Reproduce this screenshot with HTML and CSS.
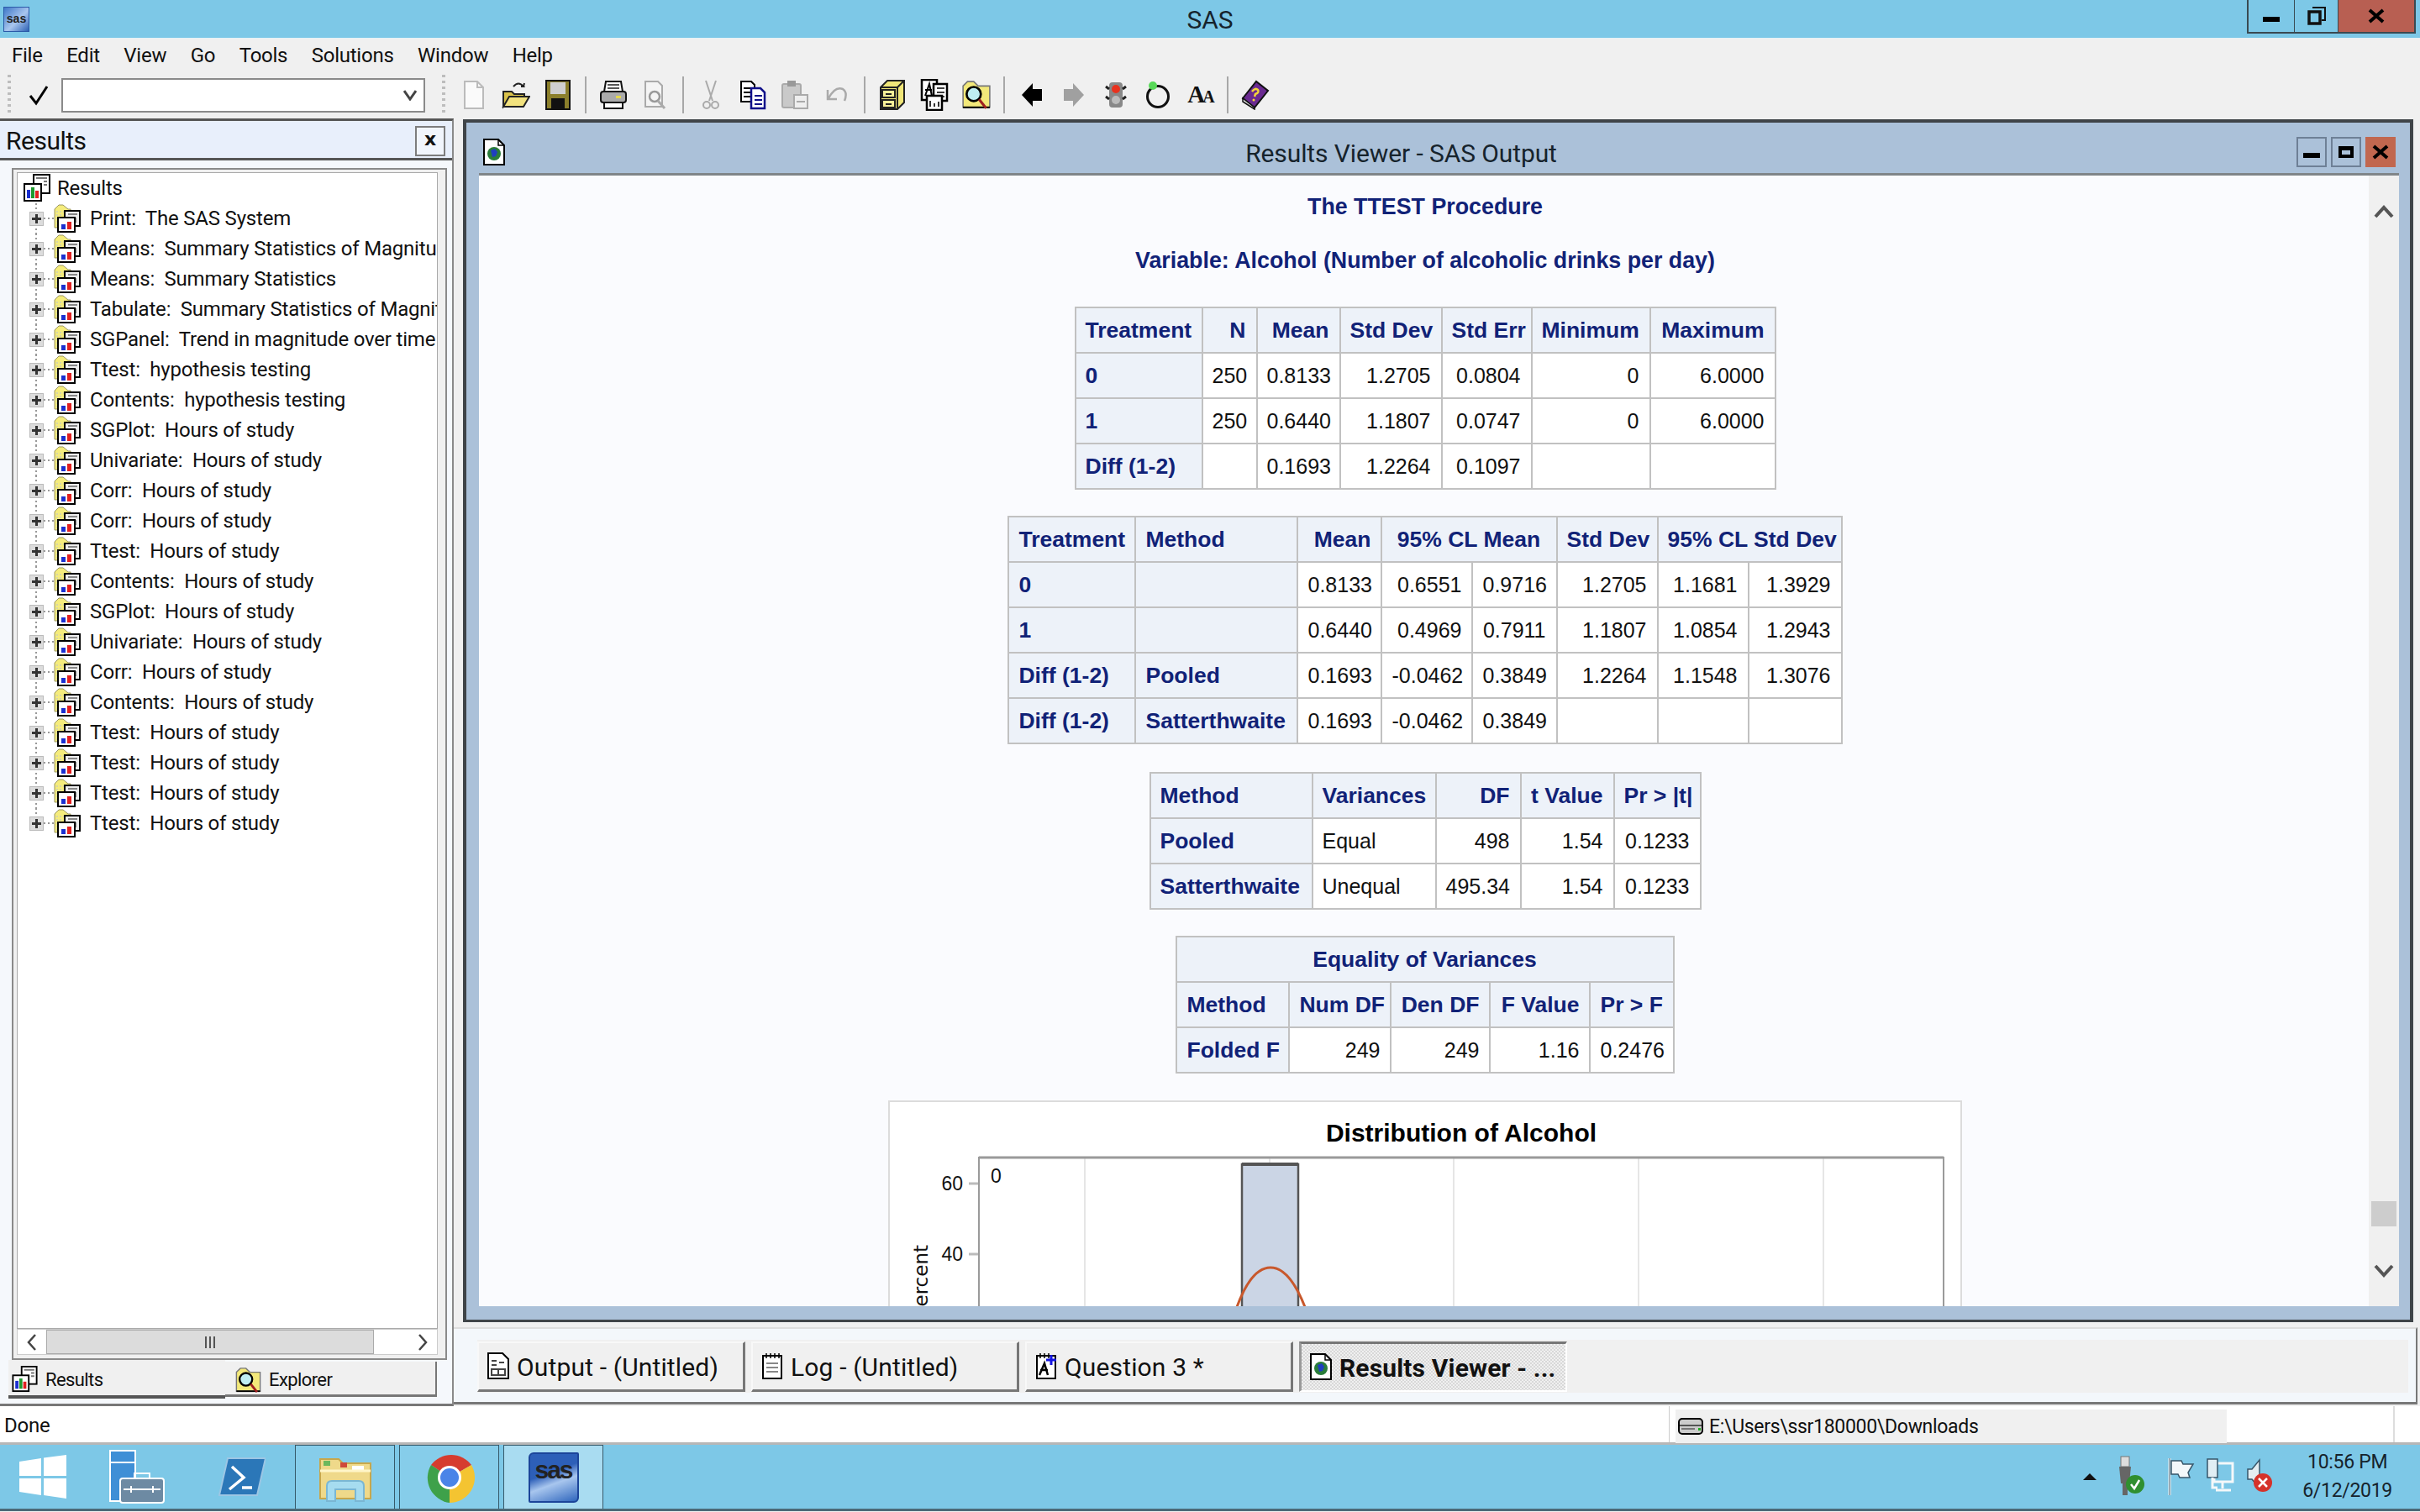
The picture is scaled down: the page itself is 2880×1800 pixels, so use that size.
FILE: index.html
```html
<!DOCTYPE html>
<html lang="en">
  <head>
    <meta charset="UTF-8" />
    <title>SAS</title>
    <link rel="stylesheet" href="styles.css">
  </head>
  <body>
    <svg class="defs" width="0" height="0">
      <!-- Results icon: two stacked windows with a small bar chart -->
      <symbol id="i-results" viewBox="0 0 32 34">
        <rect x="12" y="1" width="19" height="22" fill="#fff" stroke="#000" stroke-width="2"/>
        <path d="M15 5h13M24 9h4M24 13h4" stroke="#777" stroke-width="2"/>
        <rect x="1" y="12" width="20" height="20" fill="#fff" stroke="#000" stroke-width="2"/>
        <rect x="4" y="19" width="4" height="10" fill="#1a2fd0"/>
        <rect x="9" y="16" width="4" height="13" fill="#1f9a2e"/>
        <rect x="14" y="20" width="4" height="9" fill="#e02020"/>
      </symbol>
      <!-- Tree node: dithered folder with the results window on top -->
      <symbol id="i-node" viewBox="0 0 32 34">
        <path d="M1 6l5-5h5l6 5h3v22H1z" fill="#f5ec7c" stroke="#9a9560" stroke-width="1"/>
        <path d="M3 9h13M3 13h7M3 17h5M3 21h5M3 25h5" stroke="#d5d5a8" stroke-width="2" stroke-dasharray="2 2"/>
        <rect x="13" y="8" width="18" height="18" fill="#eee" stroke="#000" stroke-width="2"/>
        <path d="M17 12h11M26 16v6" stroke="#888" stroke-width="2"/>
        <rect x="5" y="16" width="20" height="17" fill="#fff" stroke="#000" stroke-width="2"/>
        <rect x="9" y="24" width="5" height="6" fill="#1a2fd0"/>
        <rect x="16" y="21" width="5" height="9" fill="#e02020"/>
      </symbol>
      <symbol id="i-explorer" viewBox="0 0 32 34">
        <path d="M1 7l5-5h7l5 5h13v24H1z" fill="#f3e97a" stroke="#777" stroke-width="1.5"/>
        <path d="M1 31h30" stroke="#000" stroke-width="2"/>
        <circle cx="13" cy="16" r="8" fill="#bfeef2" stroke="#000" stroke-width="2.5"/>
        <path d="M19 22l8 10" stroke="#a02020" stroke-width="3"/>
      </symbol>
      <symbol id="i-web" viewBox="0 0 26 32">
        <path d="M1 1h17l7 7v23H1z" fill="#fff" stroke="#000" stroke-width="2"/>
        <path d="M18 1v7h7" fill="none" stroke="#000" stroke-width="1.5"/>
        <circle cx="13" cy="18" r="8" fill="#2a7d3a"/>
        <path d="M9 14l5-2 3 4-2 5-4 1z" fill="#1f3fc0"/>
      </symbol>
      <symbol id="i-drive" viewBox="0 0 30 22">
        <rect x="1" y="2" width="28" height="18" rx="4" fill="#ccc" stroke="#000" stroke-width="2"/>
        <path d="M2 10h26" stroke="#555" stroke-width="2"/>
        <path d="M4 14h16" stroke="#777" stroke-width="2"/>
        <rect x="24" y="13" width="3" height="3" fill="#2a2"/>
      </symbol>
    </svg>

    <header class="titlebar">
      <div class="titlebar-left">
        <span class="app-icon">sas</span>
      </div>
      <div class="titlebar-name">SAS</div>
      <div class="win-btns">
        <div class="win-btn win-min"><span class="bar"></span></div>
        <div class="win-btn win-restore">
          <svg width="22" height="22" viewBox="0 0 22 22"><path d="M6 1h15v15h-4" fill="none" stroke="#111" stroke-width="2"/><rect x="2" y="6" width="13" height="14" fill="none" stroke="#111" stroke-width="3.5"/></svg>
        </div>
        <div class="win-btn win-close">
          <svg width="20" height="18" viewBox="0 0 20 18"><path d="M2 2l16 14M18 2L2 16" stroke="#000" stroke-width="4"/></svg>
        </div>
      </div>
    </header>

    <nav class="menubar">
      <span>File</span><span>Edit</span><span>View</span><span>Go</span><span>Tools</span><span>Solutions</span><span>Window</span><span>Help</span>
    </nav>

    <div class="toolbar">
      <span class="grip"></span>
      <svg class="check" width="28" height="28" viewBox="0 0 28 28"><path d="M4 15l7 9L24 4" fill="none" stroke="#000" stroke-width="3"/></svg>
      <div class="combo">
        <svg width="16" height="14" viewBox="0 0 16 14"><path d="M1 2l7 10 7-10" fill="none" stroke="#444" stroke-width="3"/></svg>
      </div>
      <span class="grip grip-2"></span>

      <!-- new -->
      <span class="tb"><svg width="26" height="36" viewBox="0 0 26 36"><path d="M2 2h15l7 7v25H2z" fill="#fafafa" stroke="#bbb" stroke-width="2"/><path d="M17 2v7h7" fill="none" stroke="#bbb" stroke-width="2"/></svg></span>
      <!-- open -->
      <span class="tb"><svg width="34" height="36" viewBox="0 0 34 36"><path d="M2 14h10l3 3h12v5H10L2 32z" fill="#d9c24a" stroke="#222" stroke-width="2"/><path d="M2 32l7-12h24l-7 12z" fill="#f2e27e" stroke="#222" stroke-width="2"/><path d="M14 8q6-7 12 0l-3 0m3 0l1-4" fill="none" stroke="#222" stroke-width="2"/></svg></span>
      <!-- save -->
      <span class="tb"><svg width="30" height="36" viewBox="0 0 30 36"><rect x="1" y="1" width="28" height="34" fill="#8b7f2b" stroke="#111" stroke-width="2"/><rect x="6" y="3" width="18" height="14" fill="#cfcfcf"/><rect x="7" y="22" width="16" height="12" fill="#111"/></svg></span>
      <span class="tb-sep"></span>
      <!-- print -->
      <span class="tb"><svg width="34" height="36" viewBox="0 0 34 36"><path d="M8 2h18l2 12H6z" fill="#fff" stroke="#111" stroke-width="2"/><path d="M10 6h14M10 10h14" stroke="#555" stroke-width="2"/><rect x="2" y="14" width="30" height="13" rx="3" fill="#aaa" stroke="#111" stroke-width="2"/><rect x="20" y="19" width="6" height="3" fill="#e5d84c"/><rect x="6" y="27" width="22" height="7" fill="#fff" stroke="#111" stroke-width="2"/></svg></span>
      <!-- print preview -->
      <span class="tb"><svg width="28" height="36" viewBox="0 0 28 36"><path d="M2 2h15l5 5v25H2z" fill="#f4f4f4" stroke="#aaa" stroke-width="2"/><circle cx="13" cy="20" r="6" fill="none" stroke="#999" stroke-width="2.5"/><path d="M17 25l8 9" stroke="#aaa" stroke-width="3"/></svg></span>
      <span class="tb-sep"></span>
      <!-- cut -->
      <span class="tb"><svg width="24" height="36" viewBox="0 0 24 36"><path d="M6 1l8 24M18 1l-8 24" stroke="#aaa" stroke-width="2"/><circle cx="7" cy="30" r="4" fill="none" stroke="#aaa" stroke-width="2"/><circle cx="17" cy="30" r="4" fill="none" stroke="#aaa" stroke-width="2"/></svg></span>
      <!-- copy -->
      <span class="tb"><svg width="32" height="36" viewBox="0 0 32 36"><path d="M2 2h12l4 4v20H2z" fill="#fff" stroke="#000" stroke-width="2"/><path d="M5 10h9M5 15h9M5 20h9" stroke="#000" stroke-width="2"/><path d="M14 10h11l5 5v19H14z" fill="#fff" stroke="#10108a" stroke-width="2.5"/><path d="M18 19h9M18 24h9M18 29h9" stroke="#10108a" stroke-width="2"/></svg></span>
      <!-- paste -->
      <span class="tb"><svg width="34" height="36" viewBox="0 0 34 36"><rect x="2" y="5" width="22" height="28" rx="2" fill="#c9c9c9" stroke="#aaa" stroke-width="2"/><rect x="8" y="1" width="10" height="7" fill="#999"/><rect x="16" y="18" width="16" height="16" fill="#eee" stroke="#aaa" stroke-width="2"/><path d="M19 26h10" stroke="#aaa" stroke-width="2"/></svg></span>
      <!-- undo -->
      <span class="tb"><svg width="28" height="30" viewBox="0 0 28 30"><path d="M3 9v11h11M4 19Q12 4 21 8q6 4 2 14" fill="none" stroke="#aaa" stroke-width="2.5"/></svg></span>
      <span class="tb-sep"></span>
      <!-- cabinet -->
      <span class="tb"><svg width="32" height="38" viewBox="0 0 32 38"><path d="M2 10L10 2h20v26l-8 8H2z" fill="#f0e678" stroke="#222" stroke-width="2"/><path d="M22 10l8-8M22 10v26M2 10h20" stroke="#222" stroke-width="2"/><rect x="4" y="13" width="15" height="9" fill="#f7ef98" stroke="#222" stroke-width="2"/><rect x="4" y="25" width="15" height="9" fill="#f7ef98" stroke="#222" stroke-width="2"/><path d="M8 18h7M8 30h7" stroke="#222" stroke-width="2"/></svg></span>
      <!-- program pages -->
      <span class="tb"><svg width="34" height="38" viewBox="0 0 34 38"><rect x="2" y="1" width="18" height="24" fill="#fff" stroke="#000" stroke-width="2.5"/><path d="M6 20l5-14 3 14M6 13h8" fill="none" stroke="#000" stroke-width="2"/><rect x="16" y="6" width="16" height="20" fill="#fff" stroke="#000" stroke-width="2.5"/><path d="M20 11h9M20 16h9M20 21h9" stroke="#000" stroke-width="1.5"/><rect x="8" y="20" width="18" height="17" fill="#fff" stroke="#000" stroke-width="2.5"/><path d="M12 26v7M17 29v4M22 27v6" stroke="#333" stroke-width="2"/></svg></span>
      <!-- explorer -->
      <span class="tb"><svg width="34" height="36"><use href="#i-explorer"/></svg></span>
      <span class="tb-sep"></span>
      <!-- back / forward -->
      <span class="tb"><svg width="26" height="30" viewBox="0 0 26 30"><path d="M1 15L14 1v7h11v14H14v7z" fill="#000"/></svg></span>
      <span class="tb"><svg width="26" height="30" viewBox="0 0 26 30"><path d="M25 15L12 1v7H1v14h11v7z" fill="#a0a0a0"/></svg></span>
      <!-- stop light -->
      <span class="tb"><svg width="26" height="32" viewBox="0 0 26 32"><rect x="5" y="1" width="16" height="30" rx="4" fill="#888"/><path d="M1 6l4 3M25 6l-4 3M1 18l4 3M25 18l-4 3" stroke="#222" stroke-width="3"/><circle cx="13" cy="9" r="5" fill="#e8321e"/><circle cx="13" cy="22" r="5" fill="#bbb"/></svg></span>
      <!-- refresh -->
      <span class="tb"><svg width="30" height="34" viewBox="0 0 30 34"><circle cx="15" cy="19" r="12.5" fill="none" stroke="#111" stroke-width="3"/><circle cx="9" cy="6" r="5" fill="#58d858"/></svg></span>
      <!-- font -->
      <span class="tb"><span class="tb-aa">A<small>A</small></span></span>
      <span class="tb-sep"></span>
      <!-- help book -->
      <span class="tb"><svg width="34" height="36" viewBox="0 0 34 36"><path d="M2 22L18 2l14 11-16 20z" fill="#6a2a90" stroke="#111" stroke-width="2"/><path d="M2 22l14 11v2L2 26z" fill="#e8e8e8" stroke="#111" stroke-width="1.5"/><path d="M13 14q4-5 7-2 2 3-3 5l-1 3" fill="none" stroke="#f3d63a" stroke-width="2.5"/><circle cx="15" cy="24" r="1.500" fill="#f3d63a"/></svg></span>
    </div>

    <main class="workarea">
      <!-- Results panel -->
      <aside class="side">
        <div class="side-head">
          <span class="side-title">Results</span>
          <span class="side-close">x</span>
        </div>
        <div class="side-body">
          <div class="tree-frame">
            <div class="tree">
              <div class="tree-root"><svg class="root-ic"><use href="#i-results"/></svg><span>Results</span></div>
              <div class="tree-row"><i class="plus"></i><svg class="node-ic"><use href="#i-node"/></svg><span>Print:  The SAS System</span></div>
              <div class="tree-row"><i class="plus"></i><svg class="node-ic"><use href="#i-node"/></svg><span>Means:  Summary Statistics of Magnitude</span></div>
              <div class="tree-row"><i class="plus"></i><svg class="node-ic"><use href="#i-node"/></svg><span>Means:  Summary Statistics</span></div>
              <div class="tree-row"><i class="plus"></i><svg class="node-ic"><use href="#i-node"/></svg><span>Tabulate:  Summary Statistics of Magnitude</span></div>
              <div class="tree-row"><i class="plus"></i><svg class="node-ic"><use href="#i-node"/></svg><span>SGPanel:  Trend in magnitude over time</span></div>
              <div class="tree-row"><i class="plus"></i><svg class="node-ic"><use href="#i-node"/></svg><span>Ttest:  hypothesis testing</span></div>
              <div class="tree-row"><i class="plus"></i><svg class="node-ic"><use href="#i-node"/></svg><span>Contents:  hypothesis testing</span></div>
              <div class="tree-row"><i class="plus"></i><svg class="node-ic"><use href="#i-node"/></svg><span>SGPlot:  Hours of study</span></div>
              <div class="tree-row"><i class="plus"></i><svg class="node-ic"><use href="#i-node"/></svg><span>Univariate:  Hours of study</span></div>
              <div class="tree-row"><i class="plus"></i><svg class="node-ic"><use href="#i-node"/></svg><span>Corr:  Hours of study</span></div>
              <div class="tree-row"><i class="plus"></i><svg class="node-ic"><use href="#i-node"/></svg><span>Corr:  Hours of study</span></div>
              <div class="tree-row"><i class="plus"></i><svg class="node-ic"><use href="#i-node"/></svg><span>Ttest:  Hours of study</span></div>
              <div class="tree-row"><i class="plus"></i><svg class="node-ic"><use href="#i-node"/></svg><span>Contents:  Hours of study</span></div>
              <div class="tree-row"><i class="plus"></i><svg class="node-ic"><use href="#i-node"/></svg><span>SGPlot:  Hours of study</span></div>
              <div class="tree-row"><i class="plus"></i><svg class="node-ic"><use href="#i-node"/></svg><span>Univariate:  Hours of study</span></div>
              <div class="tree-row"><i class="plus"></i><svg class="node-ic"><use href="#i-node"/></svg><span>Corr:  Hours of study</span></div>
              <div class="tree-row"><i class="plus"></i><svg class="node-ic"><use href="#i-node"/></svg><span>Contents:  Hours of study</span></div>
              <div class="tree-row"><i class="plus"></i><svg class="node-ic"><use href="#i-node"/></svg><span>Ttest:  Hours of study</span></div>
              <div class="tree-row"><i class="plus"></i><svg class="node-ic"><use href="#i-node"/></svg><span>Ttest:  Hours of study</span></div>
              <div class="tree-row"><i class="plus"></i><svg class="node-ic"><use href="#i-node"/></svg><span>Ttest:  Hours of study</span></div>
              <div class="tree-row"><i class="plus"></i><svg class="node-ic"><use href="#i-node"/></svg><span>Ttest:  Hours of study</span></div>
            </div>
            <div class="hscroll">
              <span class="hs-btn"><svg width="12" height="20" viewBox="0 0 12 20"><path d="M10 1L2 10l8 9" fill="none" stroke="#444" stroke-width="2.5"/></svg></span>
              <span class="hs-thumb"><i></i><i></i><i></i></span>
              <span class="hs-rest"></span>
              <span class="hs-btn"><svg width="12" height="20" viewBox="0 0 12 20"><path d="M2 1l8 9-8 9" fill="none" stroke="#444" stroke-width="2.5"/></svg></span>
            </div>
          </div>
          <div class="side-tabs">
            <div class="side-tab side-tab-on"><svg class="tab-ic"><use href="#i-results"/></svg>Results</div>
            <div class="side-tab"><svg class="tab-ic"><use href="#i-explorer"/></svg>Explorer</div>
          </div>
        </div>
      </aside>

      <section class="mdi">
        <div class="viewer-win">
          <div class="viewer-head">
            <svg class="viewer-ic"><use href="#i-web"/></svg>
            <span class="viewer-title">Results Viewer - SAS Output</span>
            <div class="mdi-btns">
              <span class="mdi-btn"><span class="bar"></span></span>
              <span class="mdi-btn"><span class="box"></span></span>
              <span class="mdi-btn mdi-close"><svg width="20" height="18" viewBox="0 0 20 18"><path d="M2 2l16 14M18 2L2 16" stroke="#000" stroke-width="4"/></svg></span>
            </div>
          </div>
          <div class="viewer-body">
            <div class="report">
              <h3 class="proc">The TTEST Procedure</h3>
              <h3 class="proc proc-var">Variable: Alcohol (Number of alcoholic drinks per day)</h3>

              <table class="t t1">
                <colgroup><col><col><col><col><col><col><col></colgroup>
                <tr><th class="l">Treatment</th><th>N</th><th>Mean</th><th>Std Dev</th><th>Std Err</th><th>Minimum</th><th>Maximum</th></tr>
                <tr><th class="l">0</th><td>250</td><td>0.8133</td><td>1.2705</td><td>0.0804</td><td>0</td><td>6.0000</td></tr>
                <tr><th class="l">1</th><td>250</td><td>0.6440</td><td>1.1807</td><td>0.0747</td><td>0</td><td>6.0000</td></tr>
                <tr><th class="l">Diff (1-2)</th><td></td><td>0.1693</td><td>1.2264</td><td>0.1097</td><td></td><td></td></tr>
              </table>

              <table class="t t2">
                <colgroup><col><col><col><col><col><col><col><col></colgroup>
                <tr><th class="l">Treatment</th><th class="l">Method</th><th>Mean</th><th class="c" colspan="2">95% CL Mean</th><th>Std Dev</th><th class="c" colspan="2">95% CL Std Dev</th></tr>
                <tr><th class="l">0</th><th></th><td>0.8133</td><td>0.6551</td><td>0.9716</td><td>1.2705</td><td>1.1681</td><td>1.3929</td></tr>
                <tr><th class="l">1</th><th></th><td>0.6440</td><td>0.4969</td><td>0.7911</td><td>1.1807</td><td>1.0854</td><td>1.2943</td></tr>
                <tr><th class="l">Diff (1-2)</th><th class="l">Pooled</th><td>0.1693</td><td>-0.0462</td><td>0.3849</td><td>1.2264</td><td>1.1548</td><td>1.3076</td></tr>
                <tr><th class="l">Diff (1-2)</th><th class="l">Satterthwaite</th><td>0.1693</td><td>-0.0462</td><td>0.3849</td><td></td><td></td><td></td></tr>
              </table>

              <table class="t t3">
                <colgroup><col><col><col><col><col></colgroup>
                <tr><th class="l">Method</th><th class="l">Variances</th><th>DF</th><th>t Value</th><th>Pr &gt; |t|</th></tr>
                <tr><th class="l">Pooled</th><td class="l">Equal</td><td>498</td><td>1.54</td><td>0.1233</td></tr>
                <tr><th class="l">Satterthwaite</th><td class="l">Unequal</td><td>495.34</td><td>1.54</td><td>0.1233</td></tr>
              </table>

              <table class="t t4">
                <colgroup><col><col><col><col><col></colgroup>
                <tr><th class="c" colspan="5">Equality of Variances</th></tr>
                <tr><th class="l">Method</th><th>Num DF</th><th>Den DF</th><th>F Value</th><th>Pr &gt; F</th></tr>
                <tr><th class="l">Folded F</th><td>249</td><td>249</td><td>1.16</td><td>0.2476</td></tr>
              </table>

              <div class="graph">
                <svg width="1278" height="280" viewBox="0 0 1278 280">
                  <text class="g-title" x="680" y="47" text-anchor="middle">Distribution of Alcohol</text>
                  <path d="M232 66v214M452 66v214M671 66v214M891 66v214M1111 66v214" stroke="#e6e6e6" stroke-width="2"/>
                  <path d="M106 280V66H1254V280" fill="none" stroke="#9a9a9a" stroke-width="2"/>
                  <path d="M106 66H1254" stroke="#9a9a9a" stroke-width="3"/>
                  <rect x="419" y="74" width="67" height="210" fill="#cbd5e5" stroke="#555" stroke-width="2.5"/>
                  <path d="M419 74h67" stroke="#555" stroke-width="4"/>
                  <path d="M413 244C428 203 443 197 453 197C463 197 478 203 494 244" fill="none" stroke="#c8582c" stroke-width="3"/>
                  <path d="M94 97h11M94 181h11" stroke="#bbb" stroke-width="3"/>
                  <text class="g-num" x="87" y="105" text-anchor="end">60</text>
                  <text class="g-num" x="87" y="189" text-anchor="end">40</text>
                  <text class="g-num" x="120" y="96">0</text>
                  <text class="g-axis" text-anchor="end" transform="translate(45 170) rotate(-90)">Percent</text>
                </svg>
              </div>
            </div>
            <div class="vscroll">
              <svg class="vs-up" width="24" height="18" viewBox="0 0 24 18"><path d="M2 15L12 4l10 11" fill="none" stroke="#555" stroke-width="4"/></svg>
              <span class="vs-thumb"></span>
              <svg width="24" height="18" viewBox="0 0 24 18"><path d="M2 3l10 11L22 3" fill="none" stroke="#555" stroke-width="4"/></svg>
            </div>
          </div>
        </div>

        <div class="docbar">
          <div class="docbar-inner">
            <div class="doc-btn"><svg width="28" height="32" viewBox="0 0 26 32"><path d="M1 1h17l7 7v23H1z" fill="#fff" stroke="#000" stroke-width="2"/><path d="M5 10h6M5 15h6M14 12h6M5 20h16v7H5zM13 20v7" fill="none" stroke="#444" stroke-width="2"/></svg><span>Output - (Untitled)</span></div>
            <div class="doc-btn"><svg width="28" height="32" viewBox="0 0 26 32"><rect x="2" y="4" width="22" height="27" fill="#fff" stroke="#000" stroke-width="2"/><path d="M6 1v6M11 1v6M16 1v6M21 1v6" stroke="#000" stroke-width="1.5"/><path d="M6 13h14M6 18h14M6 23h14" stroke="#888" stroke-width="2"/></svg><span>Log - (Untitled)</span></div>
            <div class="doc-btn"><svg width="28" height="32" viewBox="0 0 26 32"><rect x="2" y="4" width="22" height="27" fill="#fff" stroke="#000" stroke-width="2"/><path d="M6 1v6M11 1v6M16 1v6" stroke="#000" stroke-width="1.5"/><path d="M5 27l6-14 4 14M6 21h9" fill="none" stroke="#000" stroke-width="2.5"/><path d="M19 3v12M13 9h12" stroke="#1414e0" stroke-width="3"/></svg><span>Question 3 *</span></div>
            <div class="doc-btn doc-btn-on"><svg width="28" height="32"><use href="#i-web"/></svg><span>Results Viewer - ...</span></div>
          </div>
        </div>
      </section>
    </main>

    <div class="statusbar">
      <span class="status-msg">Done</span>
      <div class="status-path"><svg width="30" height="22"><use href="#i-drive"/></svg>E:\Users\ssr180000\Downloads</div>
      <span class="status-rest"></span>
    </div>

    <footer class="taskbar">
      <div class="task-start">
        <svg width="56" height="52" viewBox="0 0 56 52"><path d="M0 8l26-4v21H0zM29 3.500L56 0v25H29zM0 28h26v20L0 44zM29 28h27v24l-27-4z" fill="#fff"/></svg>
      </div>
      <div class="task-plain">
        <svg width="66" height="64" viewBox="0 0 66 64"><path d="M1 1h30v60H1z" fill="#3f8fd6" stroke="#fff" stroke-width="2"/><path d="M1 15h30" stroke="#fff" stroke-width="2"/><rect x="13" y="34" width="52" height="29" rx="3" fill="#6d8aa3" stroke="#fff" stroke-width="2"/><path d="M30 34v-6h18v6M17 47h44M26 43v8M52 43v8" fill="none" stroke="#fff" stroke-width="2"/></svg>
      </div>
      <div class="task-plain task-ps">
        <svg width="56" height="46" viewBox="0 0 56 46"><path d="M11 1h45l-10 44H1z" fill="#2b77b8" stroke="#9cc6e4" stroke-width="2"/><path d="M16 11l14 13-17 14M28 36h12" fill="none" stroke="#fff" stroke-width="3.500"/></svg>
      </div>
      <div class="task-btn task-first">
        <svg width="64" height="60" viewBox="0 0 64 60"><path d="M2 8h22l5 5h33v42H2z" fill="#efd98a" stroke="#c7a74c" stroke-width="2"/><path d="M6 10h8v6H6z" fill="#6cb85c"/><path d="M26 12h8v6h-8z" fill="#cf4a3a"/><path d="M40 16h14v6H40z" fill="#fff"/><path d="M2 22h60" stroke="#fff5c8" stroke-width="3"/><path d="M10 58V40q0-6 6-6h32q6 0 6 6v18H44V44H20v14z" fill="#a6dcf0" stroke="#7ab7d4" stroke-width="2"/></svg>
      </div>
      <div class="task-btn">
        <svg width="60" height="60" viewBox="0 0 60 60">
          <path d="M30 30L8 15A30 30 0 0 1 56 15z" fill="#d63c2f"/>
          <path d="M30 30L8 15A30 30 0 0 0 30 60z" fill="#3ea14a"/>
          <path d="M30 30L56 15A30 30 0 0 1 30 60z" fill="#f4c431"/>
          <circle cx="30" cy="30" r="14" fill="#fff"/>
          <circle cx="30" cy="30" r="11" fill="#4a84e8"/>
        </svg>
      </div>
      <div class="task-btn task-on">
        <div class="sas-logo">sas</div>
      </div>
      <div class="tray">
        <span class="tray-up"></span>
        <svg class="tray-usb" width="36" height="50" viewBox="0 0 36 50"><rect x="7" y="1" width="10" height="12" fill="#ddd" stroke="#777"/><path d="M5 13h14l-2 20H7z" fill="#666"/><rect x="9" y="33" width="6" height="14" fill="#666"/><circle cx="24" cy="34" r="11" fill="#2f8f2f"/><path d="M19 34l4 5 6-10" fill="none" stroke="#fff" stroke-width="2.5"/></svg>
        <svg width="34" height="48" viewBox="0 0 34 48"><path d="M4 2v44" stroke="#fff" stroke-width="3"/><path d="M4 2v44" stroke="#37566a" stroke-width="1"/><path d="M6 5h12l2 4h12l-6 10 2 6H16l-2-4H6z" fill="#f2f7fa" stroke="#37566a" stroke-width="1.500"/></svg>
        <svg width="34" height="44" viewBox="0 0 34 44"><rect x="10" y="6" width="22" height="22" fill="none" stroke="#f4f8fa" stroke-width="3"/><rect x="2" y="1" width="12" height="22" fill="#e0eef4" stroke="#37566a" stroke-width="1.500"/><path d="M20 28v8M12 38h18M8 23v12h6" fill="none" stroke="#f4f8fa" stroke-width="3"/></svg>
        <svg width="34" height="46" viewBox="0 0 34 46"><path d="M3 14h5L17 3v34L8 26H3z" fill="#e4eef2" stroke="#37566a" stroke-width="1.500"/><circle cx="21" cy="30" r="11" fill="#d5322a"/><path d="M16 25l10 10M26 25L16 35" stroke="#fff" stroke-width="2.500"/></svg>
        <div class="clock"><span>10:56 PM</span><span>6/12/2019</span></div>
      </div>
    </footer>
  </body>
</html>
```

FILE: styles.css
```css
/* SAS desktop, colours read off the screenshot */
:root {
  --aero: #7dc8e7;
  --chrome: #f0f0f0;
  --frame: #abc1d9;
  --edge: #3f4448;
  --head-text: #112277;
  --cell-line: #c1c1c1;
}

* {
  box-sizing: border-box;
}

html,
body {
  margin: 0;
  height: 1800px;
}

body {
  width: 2880px;
  display: flex;
  flex-direction: column;
  overflow: hidden;
  background: var(--chrome);
  color: #111;
  font-family: Roboto, "Open Sans", sans-serif;
  font-size: 24px;
}

.defs {
  position: absolute;
}

svg {
  flex: none;
  display: block;
}

/* Title bar */
.titlebar {
  height: 46px;
  flex: none;
  display: grid;
  grid-template-columns: 1fr auto 1fr;
  background: var(--aero);
  border-bottom: 1px solid #e6f1f6;
}

.app-icon {
  display: block;
  width: 31px;
  height: 30px;
  margin: 8px 0 0 4px;
  background: linear-gradient(135deg, #3f78c8, #a9c6ee 55%, #2d62b5);
  border: 1px solid #2b5aa8;
  color: #222;
  font: bold 14px/26px "Liberation Sans", sans-serif;
  text-align: center;
}

.titlebar-name {
  font-size: 30px;
  line-height: 48px;
  color: #16232c;
}

.win-btns {
  justify-self: end;
  display: flex;
  height: 40px;
  margin-right: 5px;
}

.win-btn {
  display: flex;
  align-items: center;
  justify-content: center;
  border: 1px solid #3a4a52;
  border-top: 0;
}

.win-min {
  width: 57px;
  border-width: 0 1px 2px 2px;
}

.win-restore {
  width: 51px;
  border-width: 0 0 2px 0;
}

.win-close {
  width: 93px;
  border-width: 0 2px 2px 1px;
  background: #b85f52;
}

.bar {
  display: block;
  width: 20px;
  height: 6px;
  margin-top: 8px;
  background: #000;
}

/* Menu and tool bars */
.menubar {
  height: 40px;
  margin-bottom: 2px;
  flex: none;
  display: flex;
  align-items: center;
  padding-left: 14px;
  gap: 28.500px;
  font-size: 24px;
  letter-spacing: -0.25px;
}

.toolbar {
  height: 50px;
  margin-bottom: 2px;
  flex: none;
  display: flex;
  align-items: center;
}

.grip {
  width: 4px;
  height: 48px;
  margin-left: 9px;
  background: repeating-linear-gradient(#bdbdbd 0 3px, transparent 3px 7px);
}

.grip-2 {
  margin-left: 20px;
  margin-right: 9px;
}

.check {
  margin: 0 13px 0 19px;
}

.combo {
  width: 433px;
  height: 41px;
  display: flex;
  align-items: center;
  justify-content: flex-end;
  padding-right: 8px;
  background: #fff;
  border: 2px solid #8a8a8a;
}

.tb {
  width: 50px;
  height: 40px;
  display: flex;
  align-items: center;
  justify-content: center;
}

.tb-sep {
  width: 2px;
  height: 44px;
  margin: 0 7px;
  background: #a8a8a8;
}

.tb-aa {
  font: bold 29px/36px "Liberation Serif", serif;
  letter-spacing: -3px;
  color: #111;
}

.tb-aa small {
  font-size: 20px;
}

/* Main area */
.workarea {
  height: 1534px;
  flex: none;
  display: flex;
}

.side {
  width: 540px;
  flex: none;
  margin-top: 1px;
  display: flex;
  flex-direction: column;
  border-top: 3px solid #555;
  border-bottom: 3px solid #777;
  border-right: 2px solid #8a8a8a;
  background: #f5f8fc;
}

.side-head {
  height: 47px;
  flex: none;
  display: flex;
  align-items: center;
  justify-content: space-between;
  padding: 3px 8px 0 7px;
  background: #e8effb;
  border-bottom: 3px solid #555;
}

.side-title {
  font-size: 30px;
  letter-spacing: -0.5px;
}

.side-close {
  width: 36px;
  height: 36px;
  background: #f1f5fc;
  border: 2px solid #7d7d7d;
  font: bold 22px/28px "DejaVu Sans", sans-serif;
  text-align: center;
}

.side-body {
  flex: 1;
  min-height: 0;
  display: flex;
  flex-direction: column;
  padding: 9px 0 0 14px;
}

.tree-frame {
  width: 518px;
  height: 1419px;
  flex: none;
  padding: 3px 9px 4px 4px;
  border: 2px solid #8a8a8a;
  background: #f0f0f0;
  display: flex;
  flex-direction: column;
}

.tree {
  flex: 1;
  min-height: 0;
  overflow: hidden;
  background: #fff;
  border: 1px solid #aaa;
}

.tree span {
  white-space: pre;
}

.tree-root,
.tree-row {
  height: 36px;
  display: flex;
  align-items: center;
  letter-spacing: -0.2px;
}

.tree-root {
  padding-left: 7px;
}

.root-ic {
  width: 32px;
  height: 34px;
  margin-right: 8px;
}

/* dotted tree lines: one down through the box, one across to the icon */
.tree-row {
  padding-left: 14px;
  background-image:
    repeating-linear-gradient(#999 0 2px, transparent 2px 5px),
    repeating-linear-gradient(90deg, #999 0 2px, transparent 2px 5px);
  background-repeat: no-repeat;
  background-size: 2px 100%, 12px 2px;
  background-position: 21px 0, 31px 50%;
}

.tree-row:last-child {
  background-size: 2px 50%, 12px 2px;
}

.plus {
  position: relative;
  width: 17px;
  height: 17px;
  flex: none;
  margin-right: 12px;
  background: #dcdcdc;
  border: 1px solid #bbb;
}

.plus::before,
.plus::after {
  content: "";
  position: absolute;
  background: #333;
}

.plus::before {
  left: 2px;
  right: 2px;
  top: 6px;
  height: 3px;
}

.plus::after {
  top: 2px;
  bottom: 2px;
  left: 6px;
  width: 3px;
}

.node-ic {
  width: 32px;
  height: 34px;
  margin-right: 11px;
}

.hscroll {
  height: 31px;
  flex: none;
  display: flex;
  background: #fff;
  border: 1px solid #ccc;
}

.hs-btn {
  width: 34px;
  flex: none;
  display: flex;
  align-items: center;
  justify-content: center;
}

.hs-thumb {
  width: 390px;
  flex: none;
  display: flex;
  align-items: center;
  justify-content: center;
  gap: 3px;
  background: #dcdcdc;
  border: 1px solid #aaa;
}

.hs-thumb i {
  width: 2px;
  height: 14px;
  background: #555;
}

.hs-rest {
  flex: 1;
}

.side-tabs {
  display: flex;
  margin-left: -4px;
}

.side-tab {
  height: 42px;
  width: 252px;
  display: flex;
  align-items: center;
  gap: 9px;
  padding: 4px 0 0 12px;
  margin-top: 2px;
  background: var(--chrome);
  border-right: 2px solid #777;
  border-bottom: 3px solid #777;
  font-size: 22px;
  letter-spacing: -0.6px;
}

.side-tab-on {
  width: 258px;
  height: 46px;
  margin-top: 0;
  padding-left: 4px;
  border-right: 0;
  border-bottom: 4px solid #555;
}

.tab-ic {
  width: 31px;
  height: 32px;
}

/* Right hand side */
.mdi {
  flex: 1;
  min-width: 0;
  display: flex;
  flex-direction: column;
  padding: 2px 8px 0 11px;
}

.viewer-win {
  height: 1432px;
  flex: none;
  display: flex;
  flex-direction: column;
  background: var(--frame);
  border: 4px solid var(--edge);
  border-bottom-width: 3px;
  padding: 0 13px 16px 15px;
}

.viewer-head {
  position: relative;
  height: 63px;
  flex: none;
  display: flex;
  align-items: center;
  padding-top: 10px;
  border-bottom: 3px solid #808589;
}

.viewer-ic {
  width: 28px;
  height: 32px;
  margin: 0 0 0 4px;
}

.viewer-title {
  flex: 1;
  text-align: center;
  padding-top: 2px;
  font-size: 30px;
  letter-spacing: -0.1px;
  color: #16232c;
}

.mdi-btns {
  display: flex;
  gap: 5px;
  margin-right: 4px;
}

.mdi-btn {
  width: 36px;
  height: 36px;
  display: flex;
  align-items: center;
  justify-content: center;
  border: 2px solid #6e8096;
}

.mdi-btn .box {
  width: 18px;
  height: 14px;
  border: 4px solid #000;
  border-top-width: 5px;
}

.mdi-close {
  background: #c1674f;
  border-color: #c1674f;
}

.viewer-body {
  flex: 1;
  min-height: 0;
  display: flex;
}

.report {
  flex: 1;
  min-width: 0;
  overflow: hidden;
  display: flex;
  flex-direction: column;
  align-items: center;
  padding: 19px 0 0 3px;
  background: #fafbfe;
}

.proc {
  margin: 0;
  font: bold 26.800px/36px "Liberation Sans", sans-serif;
  color: var(--head-text);
}

.proc-var {
  margin: 28px 0 37px;
}

/* Report tables */
.t {
  flex: none;
  border-collapse: collapse;
  table-layout: fixed;
  margin-bottom: 31px;
  background: #fff;
  font: 25px "Liberation Sans", sans-serif;
  color: #111;
}

.t tr {
  height: 54px;
}

.t th,
.t td {
  padding: 0 12px 0 11px;
  border: 2px solid var(--cell-line);
  text-align: right;
  white-space: nowrap;
  overflow: hidden;
}

.t th {
  background: #edf2f9;
  color: var(--head-text);
  font-size: 26.500px;
  font-weight: bold;
}

.t .l {
  text-align: left;
}

.t .c {
  text-align: center;
}

.t1 {
  width: 833px;
}

.t1 col:nth-child(1) { width: 151px; }
.t1 col:nth-child(2) { width: 65px; }
.t1 col:nth-child(3) { width: 99px; }
.t1 col:nth-child(4) { width: 121px; }
.t1 col:nth-child(5) { width: 107px; }
.t1 col:nth-child(6) { width: 141px; }
.t1 col:nth-child(7) { width: 149px; }

.t2 {
  width: 991px;
  margin-bottom: 33px;
}

.t2 col:nth-child(1) { width: 151px; }
.t2 col:nth-child(2) { width: 193px; }
.t2 col:nth-child(3) { width: 100px; }
.t2 col:nth-child(4) { width: 108px; }
.t2 col:nth-child(5) { width: 100px; }
.t2 col:nth-child(6) { width: 120px; }
.t2 col:nth-child(7) { width: 108px; }
.t2 col:nth-child(8) { width: 111px; }

.t3 {
  width: 655px;
  margin-bottom: 31px;
}

.t3 col:nth-child(1) { width: 193px; }
.t3 col:nth-child(2) { width: 147px; }
.t3 col:nth-child(3) { width: 101px; }
.t3 col:nth-child(4) { width: 111px; }
.t3 col:nth-child(5) { width: 103px; }

.t4 {
  width: 591px;
  margin-bottom: 32px;
}

.t4 col:nth-child(1) { width: 134px; }
.t4 col:nth-child(2) { width: 121px; }
.t4 col:nth-child(3) { width: 118px; }
.t4 col:nth-child(4) { width: 119px; }
.t4 col:nth-child(5) { width: 99px; }

/* Histogram, cut off by the window */
.graph {
  flex: none;
  width: 1278px;
  height: 300px;
  background: #fff;
  border: 2px solid #dcdcdc;
  border-bottom: 0;
}

.g-title {
  font: bold 30px "Liberation Sans", sans-serif;
  fill: #000;
}

.g-num {
  font: 23px "Liberation Sans", sans-serif;
  fill: #111;
}

.g-axis {
  font: 23px "DejaVu Sans", sans-serif;
  fill: #111;
}

.vscroll {
  width: 36px;
  flex: none;
  display: flex;
  flex-direction: column;
  align-items: center;
  padding: 34px 0 33px;
  background: var(--chrome);
}

.vs-up {
  margin-bottom: auto;
}

.vs-thumb {
  width: 30px;
  height: 30px;
  margin-bottom: 44px;
  background: #cdcdcd;
}

/* Open documents */
.docbar {
  flex: 1;
  display: flex;
  margin: 6px -5px 2px -11px;
  padding: 13px 9px 11px 28px;
  background: #f3f7fb;
  border-right: 2px solid #777;
  border-bottom: 3px solid #777;
  border-top: 2px solid #ddd;
}

.docbar-inner {
  flex: 1;
  display: flex;
  align-items: center;
  gap: 7px;
  background: var(--chrome);
}

.doc-btn {
  width: 319px;
  height: 60px;
  flex: none;
  display: flex;
  align-items: center;
  gap: 8px;
  padding-left: 9px;
  background: var(--chrome);
  border: 2px solid #f8f8f8;
  border-right: 3px solid #777;
  border-bottom: 3px solid #777;
  font-size: 30px;
  letter-spacing: 0.15px;
}

.doc-btn span {
  padding-top: 3px;
}

.doc-btn-on {
  font-weight: bold;
  border: 2px solid #fff;
  border-top: 3px solid #777;
  border-left: 3px solid #999;
  background: repeating-conic-gradient(#d8d8d8 0 25%, #f0f0f0 0 50%) 0 0 / 4px 4px;
}

/* Status */
.statusbar {
  height: 46px;
  flex: none;
  display: flex;
  background: #fff;
  border-bottom: 3px solid #b7b7b7;
}

.status-msg {
  width: 1987px;
  flex: none;
  padding-left: 5px;
  line-height: 46px;
  border-right: 1px solid #ccc;
  letter-spacing: -0.2px;
}

.status-path {
  width: 656px;
  flex: none;
  display: flex;
  align-items: center;
  gap: 7px;
  height: 40px;
  margin: 4px 0 0 7px;
  padding-left: 3px;
  background: var(--chrome);
  font-size: 23px;
  letter-spacing: -0.3px;
}

.status-rest {
  width: 200px;
  flex: none;
  border-right: 2px solid #ddd;
}

/* Windows task bar */
.taskbar {
  height: 79px;
  flex: none;
  display: flex;
  align-items: center;
  background: var(--aero);
  border-bottom: 3px solid #4b6a78;
}

.task-start {
  width: 130px;
  padding-left: 23px;
}

.task-plain {
  width: 130px;
}

.task-ps {
  width: 91px;
}

.task-btn {
  width: 119px;
  height: 100%;
  margin-right: 5px;
  display: flex;
  align-items: center;
  justify-content: center;
  border-left: 1px solid #35596a;
  border-right: 1px solid #35596a;
  border-top: 1px solid #35596a;
  background: #86cdea;
}

.task-on {
  background: #a9dcf1;
}

.sas-logo {
  width: 60px;
  height: 60px;
  padding-top: 3px;
  background: linear-gradient(160deg, #2d5fb8, #2d5fb8 40%, #a8c6ee 60%, #2f66bd);
  border: 2px solid #1c459a;
  border-radius: 6px 2px 6px 2px;
  color: #222;
  font: bold 30px/32px "Liberation Sans", sans-serif;
  letter-spacing: -2px;
  text-align: center;
}

.tray {
  margin-left: auto;
  display: flex;
  align-items: center;
  gap: 13px;
  padding-right: 33px;
}

.tray-up {
  width: 0;
  height: 0;
  margin-right: 9px;
  border: 8px solid transparent;
  border-top: 0;
  border-bottom: 8px solid #111;
}

.tray-usb {
  margin-right: 12px;
}

.clock {
  margin-left: 21px;
  display: flex;
  flex-direction: column;
  align-items: center;
  line-height: 34px;
  font-size: 23px;
  letter-spacing: -0.3px;
  color: #16232c;
}
```
